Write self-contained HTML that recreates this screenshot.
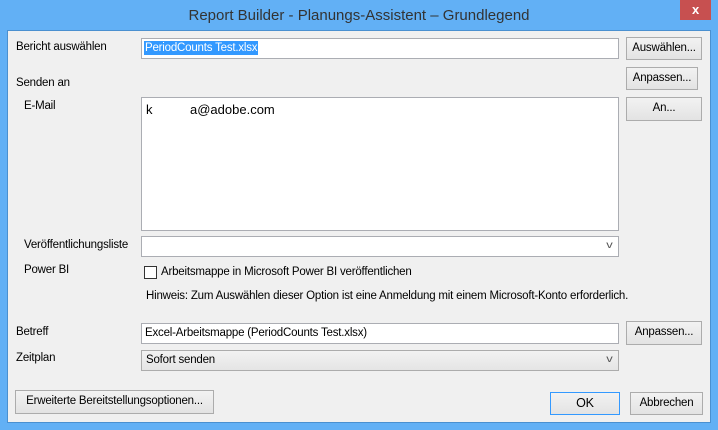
<!DOCTYPE html>
<html><head><style>
*{box-sizing:border-box;margin:0;padding:0}
body{width:718px;height:430px;background:#62b0f5;font-family:"Liberation Sans",sans-serif;font-size:11.5px;color:#000;position:relative;overflow:hidden;letter-spacing:-0.2px}
.a{position:absolute;white-space:nowrap}
.win{position:absolute;left:7px;top:30px;width:704px;height:393px;background:#f0f0f0;border:1px solid #4a90d0}
.title{left:0;top:7px;width:718px;text-align:center;font-size:15px;color:#333;letter-spacing:0}
.close{left:680px;top:0;width:31px;height:20px;background:#c75050;color:#fff;text-align:center;font-size:13px;line-height:20px;font-weight:bold}
.in{position:absolute;background:#fff;border:1px solid #abadb3}
.btn{position:absolute;background:linear-gradient(#f2f2f2,#e3e3e3);border:1px solid #acacac;text-align:center;line-height:21px}
.dd{position:absolute;right:6px;top:3px;font-size:10px;color:#555;transform:scaleX(1.3)}
</style></head><body>
<div class="a title">Report Builder - Planungs-Assistent – Grundlegend</div>
<div class="a close">x</div>
<div class="win"></div>
<div class="a" style="left:16px;top:41px">Bericht auswählen</div>
<div class="in" style="left:141px;top:38px;width:478px;height:21px"><span style="position:absolute;left:2px;top:2px;background:#3399ff;color:#fff;padding:1px 1px">PeriodCounts Test.xlsx</span></div>
<div class="btn" style="left:626px;top:37px;width:76px;height:23px">Auswählen...</div>
<div class="a" style="left:16px;top:77px">Senden an</div>
<div class="btn" style="left:626px;top:67px;width:72px;height:23px">Anpassen...</div>
<div class="a" style="left:24px;top:100px">E-Mail</div>
<div class="in" style="left:141px;top:97px;width:478px;height:134px"><span class="a" style="left:4px;top:4px;font-size:13px;letter-spacing:0">k</span><span class="a" style="left:48px;top:4px;font-size:13px;letter-spacing:0">a@adobe.com</span></div>
<div class="btn" style="left:626px;top:97px;width:76px;height:24px">An...</div>
<div class="a" style="left:24px;top:239px">Veröffentlichungsliste</div>
<div class="in" style="left:141px;top:236px;width:478px;height:21px"><span class="dd">v</span></div>
<div class="a" style="left:24px;top:264px">Power BI</div>
<div class="in" style="left:144px;top:266px;width:13px;height:13px;border-color:#333"></div>
<div class="a" style="left:161px;top:266px">Arbeitsmappe in Microsoft Power BI veröffentlichen</div>
<div class="a" style="left:146px;top:290px">Hinweis: Zum Auswählen dieser Option ist eine Anmeldung mit einem Microsoft-Konto erforderlich.</div>
<div class="a" style="left:16px;top:326px">Betreff</div>
<div class="in" style="left:141px;top:323px;width:478px;height:21px"><span class="a" style="left:3px;top:3px">Excel-Arbeitsmappe (PeriodCounts Test.xlsx)</span></div>
<div class="btn" style="left:626px;top:321px;width:76px;height:24px">Anpassen...</div>
<div class="a" style="left:16px;top:352px">Zeitplan</div>
<div class="in" style="left:141px;top:350px;width:478px;height:21px;background:linear-gradient(#f2f2f2,#e5e5e5);border-color:#acacac"><span class="a" style="left:4px;top:3px">Sofort senden</span><span class="dd">v</span></div>
<div class="btn" style="left:15px;top:390px;width:199px;height:24px">Erweiterte Bereitstellungsoptionen...</div>
<div class="btn" style="left:550px;top:392px;width:70px;height:23px;border-color:#3399ff;font-size:12.5px">OK</div>
<div class="btn" style="left:630px;top:392px;width:73px;height:23px">Abbrechen</div>
</body></html>
